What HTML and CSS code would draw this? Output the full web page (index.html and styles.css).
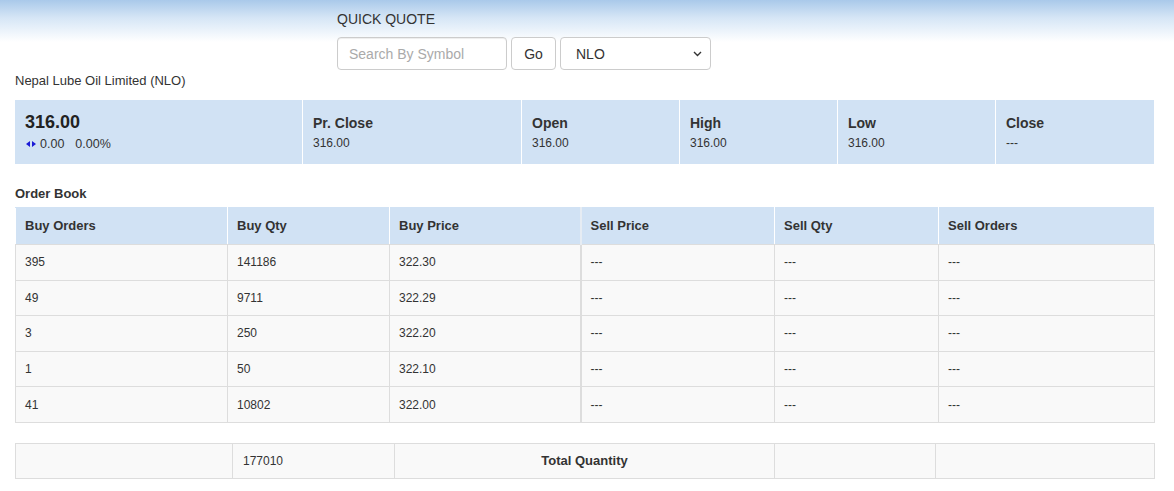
FILE: index.html
```html
<!DOCTYPE html>
<html lang="en">
<head>
<meta charset="utf-8">
<title>Quick Quote - NLO</title>
<link rel="stylesheet" href="styles.css">
</head>
<body>
<div class="page">
  <div class="quick">
    <div class="quick-title">QUICK QUOTE</div>
    <div class="quick-form">
      <input class="search" type="text" placeholder="Search By Symbol">
      <button class="go" type="button">Go</button>
      <div class="select-wrap">
        <select class="symbol"><option>NLO</option></select>
        <svg class="chev" width="9" height="6" viewBox="0 0 9 6"><path d="M1 1 L4.5 4.5 L8 1" fill="none" stroke="#333" stroke-width="1.4"/></svg>
      </div>
    </div>
  </div>

  <div class="company">Nepal Lube Oil Limited (NLO)</div>

  <div class="quote-bar">
    <div class="qcell first">
      <div class="ltp">316.00</div>
      <div class="change">
        <svg class="arr" width="10" height="6" viewBox="0 0 10 6"><path d="M0 3 L4 0 L4 6 Z M10 3 L6 0 L6 6 Z" fill="#1a1ad6"/></svg>
        <span>0.00</span><span class="pct">0.00%</span>
      </div>
    </div>
    <div class="qcell"><div class="qlabel">Pr. Close</div><div class="qval">316.00</div></div>
    <div class="qcell"><div class="qlabel">Open</div><div class="qval">316.00</div></div>
    <div class="qcell"><div class="qlabel">High</div><div class="qval">316.00</div></div>
    <div class="qcell"><div class="qlabel">Low</div><div class="qval">316.00</div></div>
    <div class="qcell"><div class="qlabel">Close</div><div class="qval">---</div></div>
  </div>

  <div class="ob-title">Order Book</div>
  <table class="ob">
    <colgroup>
      <col class="c1"><col class="c2"><col class="c3"><col class="c4"><col class="c5"><col class="c6">
    </colgroup>
    <thead>
      <tr><th>Buy Orders</th><th>Buy Qty</th><th class="split">Buy Price</th><th>Sell Price</th><th>Sell Qty</th><th>Sell Orders</th></tr>
    </thead>
    <tbody>
      <tr><td>395</td><td>141186</td><td class="split">322.30</td><td>---</td><td>---</td><td>---</td></tr>
      <tr><td>49</td><td>9711</td><td class="split">322.29</td><td>---</td><td>---</td><td>---</td></tr>
      <tr><td>3</td><td>250</td><td class="split">322.20</td><td>---</td><td>---</td><td>---</td></tr>
      <tr><td>1</td><td>50</td><td class="split">322.10</td><td>---</td><td>---</td><td>---</td></tr>
      <tr><td>41</td><td>10802</td><td class="split">322.00</td><td>---</td><td>---</td><td>---</td></tr>
    </tbody>
  </table>

  <table class="total">
    <colgroup>
      <col class="t1"><col class="t2"><col class="t3"><col class="t4"><col class="t5">
    </colgroup>
    <tbody>
      <tr><td></td><td>177010</td><td class="tq">Total Quantity</td><td></td><td></td></tr>
    </tbody>
  </table>
</div>
</body>
</html>
```

FILE: styles.css
```css
* { box-sizing: border-box; }
html, body { margin: 0; padding: 0; }
body {
  font-family: "Liberation Sans", Arial, sans-serif;
  font-size: 12px;
  color: #333;
  background: linear-gradient(to bottom, #a9c9ea 0px, #d6e6f6 18px, #ffffff 42px) no-repeat;
  background-color: #fff;
  min-height: 491px;
}
.page { padding: 0 20px 0 15px; }

.quick { padding-left: 322px; padding-top: 11px; }
.quick-title { font-size: 14px; line-height: 16px; height: 27px; }
.quick-form { display: flex; gap: 4px; height: 33px; margin-top: -1px; }
.search {
  width: 170px; height: 33px;
  border: 1px solid #ccc; border-radius: 4px;
  padding: 0 11px; font: 14px "Liberation Sans", Arial, sans-serif; color: #555;
  box-shadow: inset 0 1px 1px rgba(0,0,0,.075);
}
.search::placeholder { color: #aaa; }
.go {
  width: 45px; height: 33px;
  border: 1px solid #ccc; border-radius: 4px; background: #fff;
  font: 14px "Liberation Sans", Arial, sans-serif; color: #333; padding: 0;
}
.select-wrap { position: relative; width: 151px; height: 33px; }
.symbol {
  appearance: none; -webkit-appearance: none;
  width: 100%; height: 100%;
  border: 1px solid #ccc; border-radius: 4px; background: #fff;
  padding: 0 15px; font: 14px "Liberation Sans", Arial, sans-serif; color: #333;
}
.chev { position: absolute; right: 9px; top: 14px; pointer-events: none; }

.company { margin-top: 1px; font-size: 13px; line-height: 15px; height: 29px; padding-top: 2px; }

.quote-bar {
  display: grid;
  grid-template-columns: 287px 218px 157px 157px 157px 1fr;
  gap: 1px;
  background: #fff;
  height: 64px;
}
.qcell { background: #d1e2f4; padding: 15px 10px 0 10px; }
.qcell.first { padding-top: 12px; }
.ltp { font-size: 18px; font-weight: bold; line-height: 21px; color: #222; }
.change { display: flex; align-items: center; line-height: 14px; margin-top: 4px; font-size: 12.5px; }
.arr { margin-left: 1px; margin-right: 4px; }
.pct { margin-left: 11px; }
.qlabel { font-size: 14px; font-weight: bold; line-height: 16px; color: #333; }
.qval { font-size: 12px; line-height: 16px; margin-top: 4px; }

.ob-title { font-size: 13px; font-weight: bold; margin-top: 22px; line-height: 15px; height: 21px; }

table { border-collapse: collapse; table-layout: fixed; width: 1139px; }
.ob col.c1 { width: 212px; }
.ob col.c2 { width: 162px; }
.ob col.c3 { width: 191px; }
.ob col.c4 { width: 194px; }
.ob col.c5 { width: 164px; }
.ob col.c6 { width: 216px; }
.ob th, .ob td { border: 1px solid #ddd; text-align: left; padding: 0 9px; }
.ob th {
  background: #d1e2f4; height: 37px; font-size: 13px; font-weight: bold; color: #333;
  border-color: #d1e2f4 #fff #fff #fff;
  border-bottom: 1px solid #ddd;
  padding-bottom: 2px;
}
.ob td { background: #f9f9f9; height: 35.6px; font-size: 12px; }
.ob th.split { border-right: 2px solid #e6ecf3; }
.ob td.split { border-right: 2px solid #ddd; }

.total { margin-top: 20px; }
.total col.t1 { width: 217px; }
.total col.t2 { width: 162px; }
.total col.t3 { width: 380px; }
.total col.t4 { width: 161px; }
.total col.t5 { width: 219px; }
.total td { border: 1px solid #ddd; background: #f9f9f9; height: 35px; padding: 0 10px; font-size: 12px; }
.total td.tq { text-align: center; font-weight: bold; font-size: 13px; }
```
